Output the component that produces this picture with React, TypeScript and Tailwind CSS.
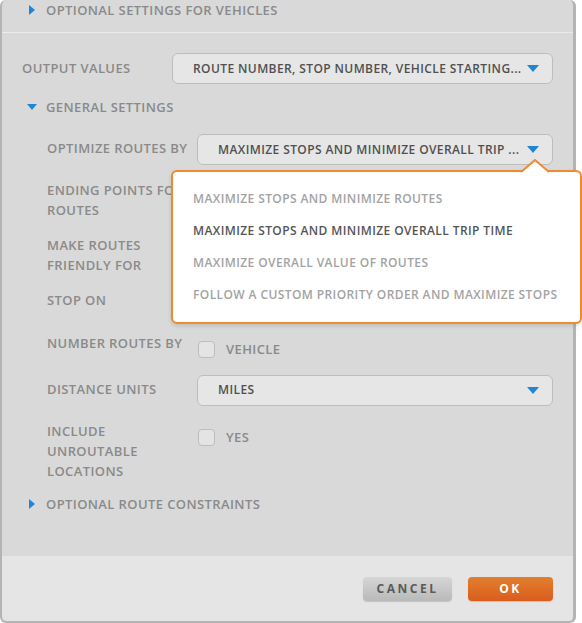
import React from 'react';

const font = { fontFamily: '"Open Sans", "Liberation Sans", sans-serif' };

function Caret() {
  return (
    <svg width="12" height="7" viewBox="0 0 12 7" className="shrink-0">
      <path d="M0 0 L12 0 L6 7 Z" fill="#1f86d6" />
    </svg>
  );
}

function RightTri() {
  return (
    <svg width="6" height="10" viewBox="0 0 6 10" className="shrink-0">
      <path d="M0 0 L6 5 L0 10 Z" fill="#1f86d6" />
    </svg>
  );
}

function DownTri() {
  return (
    <svg width="10" height="6" viewBox="0 0 10 6" className="shrink-0">
      <path d="M0 0 L10 0 L5 6 Z" fill="#1f86d6" />
    </svg>
  );
}

function Select({ value, width }: { value: string; width: string }) {
  return (
    <div
      className={`${width} h-[31px] flex items-center justify-between pl-[20px] pr-[13px] rounded-md border border-[#bdbdbd] bg-[#e6e6e6] text-[12px] font-semibold tracking-[0.4px] text-[#505050] whitespace-nowrap`}
    >
      <span>{value}</span>
      <Caret />
    </div>
  );
}

function Checkbox({ label }: { label: string }) {
  return (
    <div className="flex items-center gap-[11px]">
      <div className="w-[17px] h-[17px] rounded-[4px] border border-[#bdbdbd] bg-[#e4e4e4]" />
      <span className="text-[13px] font-semibold tracking-[0.4px] text-[#8a8a8a]">{label}</span>
    </div>
  );
}

const label = 'text-[13px] font-semibold tracking-[0.4px] text-[#8a8a8a] leading-[20px]';

export default function App() {
  return (
    <div className="w-[582px] h-[623px] bg-white" style={font}>
      <div className="relative w-[576px] h-[623px] flex flex-col bg-[#d9d9d9] rounded-md border-l-2 border-r-[3px] border-b-2 border-[#b4b4b4]">
        {/* top collapsed section */}
        <div className="flex items-center gap-[11px] pl-[27px] h-[20px] box-content pb-[12px] border-b border-[#ebebeb]">
          <RightTri />
          <span className={label}>OPTIONAL SETTINGS FOR VEHICLES</span>
        </div>

        <div className="flex-1 px-[20px]">
          {/* output values */}
          <div className="flex items-start mt-[20px]">
            <div className={`w-[150px] pt-[5px] ${label}`}>OUTPUT VALUES</div>
            <Select width="w-[381px]" value="ROUTE NUMBER, STOP NUMBER, VEHICLE STARTING..." />
          </div>

          <div className="flex items-center gap-[9px] pl-[5px] mt-[13px] h-[20px]">
            <DownTri />
            <span className={label}>GENERAL SETTINGS</span>
          </div>

          <div className="pl-[25px]">
            <div className="flex items-start mt-[17px]">
              <div className={`w-[150px] pt-[4px] whitespace-nowrap ${label}`}>OPTIMIZE ROUTES BY</div>
              <Select width="w-[356px]" value="MAXIMIZE STOPS AND MINIMIZE OVERALL TRIP ..." />
            </div>

            <div className={`mt-[15px] w-[150px] ${label}`}>
              ENDING POINTS FOR<br />ROUTES
            </div>

            <div className={`mt-[15px] w-[150px] ${label}`}>
              MAKE ROUTES<br />FRIENDLY FOR
            </div>

            <div className={`mt-[15px] w-[150px] ${label}`}>STOP ON</div>

            <div className="flex items-start mt-[23px]">
              <div className={`w-[151px] whitespace-nowrap ${label}`}>NUMBER ROUTES BY</div>
              <div className="pt-[7px]">
                <Checkbox label="VEHICLE" />
              </div>
            </div>

            <div className="flex items-start mt-[15px]">
              <div className={`w-[150px] pt-[4px] ${label}`}>DISTANCE UNITS</div>
              <Select width="w-[356px]" value="MILES" />
            </div>

            <div className="flex items-start mt-[15px]">
              <div className={`w-[151px] ${label}`}>
                INCLUDE<br />UNROUTABLE<br />LOCATIONS
              </div>
              <div className="pt-[7px]">
                <Checkbox label="YES" />
              </div>
            </div>
          </div>

          <div className="flex items-center gap-[11px] pl-[7px] mt-[13px] h-[20px]">
            <RightTri />
            <span className={label}>OPTIONAL ROUTE CONSTRAINTS</span>
          </div>
        </div>

        {/* footer */}
        <div className="h-[65px] bg-[#e5e5e5] flex items-start justify-end gap-[16px] pr-[20px] pt-[21px] rounded-b-md">
          <button className="w-[89px] h-[24px] rounded-[4px] bg-gradient-to-b from-[#d6d6d6] to-[#b9b9b9] text-[12px] font-bold tracking-[2.5px] text-[#5a5a5a] shadow-[0_1px_1px_rgba(0,0,0,0.15)]">
            CANCEL
          </button>
          <button className="w-[85px] h-[24px] rounded-[4px] bg-gradient-to-b from-[#e27f2e] to-[#d95c1d] text-[12px] font-bold tracking-[2.5px] text-white shadow-[0_1px_1px_rgba(0,0,0,0.15)]">
            OK
          </button>
        </div>

        {/* open dropdown list */}
        <div className="absolute left-[169px] top-[170px] w-[411px] h-[154px] bg-white border-2 border-[#f08a2c] rounded-md shadow-[0_2px_4px_rgba(0,0,0,0.12)] py-[11px] z-10">
          <svg width="28" height="14" viewBox="0 0 28 14" className="absolute left-[348px] top-[-13px]">
            <path d="M0 14 L14 1 L28 14 Z" fill="#ffffff" />
            <path d="M0 13 L14 1 L28 13" fill="none" stroke="#f08a2c" strokeWidth="2" />
          </svg>
          {[
            'MAXIMIZE STOPS AND MINIMIZE ROUTES',
            'MAXIMIZE STOPS AND MINIMIZE OVERALL TRIP TIME',
            'MAXIMIZE OVERALL VALUE OF ROUTES',
            'FOLLOW A CUSTOM PRIORITY ORDER AND MAXIMIZE STOPS',
          ].map((item, i) => (
            <div
              key={item}
              className={`h-[32px] flex items-center pl-[20px] text-[12px] font-semibold tracking-[0.4px] whitespace-nowrap ${
                i === 1 ? 'text-[#555555]' : 'text-[#a3a3a3]'
              }`}
            >
              {item}
            </div>
          ))}
        </div>
      </div>
    </div>
  );
}
